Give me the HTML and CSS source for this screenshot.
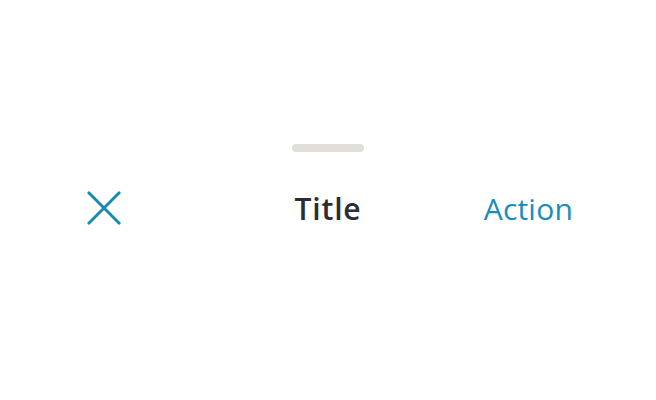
FILE: index.html
```html
<!DOCTYPE html>
<html lang="en">
<head>
    <meta charset="UTF-8">
    <meta name="viewport" content="width=device-width, initial-scale=1.0">
    <title>sheet</title>
    <link rel="stylesheet" href="styles.css">
</head>
<body>
    <div class="sheet">
        <div class="handle"></div>
        <div class="bar">
            <button class="close" aria-label="Close">
                <svg width="34" height="34" viewBox="0 0 34 34">
                    <path d="M1 1L33 33M33 1L1 33" stroke="#1a8ab6" stroke-width="3" fill="none"/>
                </svg>
            </button>
            <span class="title">Title</span>
            <span class="action">Action</span>
        </div>
    </div>
</body>
</html>
```
FILE: styles.css
```css
*{
    margin: 0;padding: 0;box-sizing: border-box;
}
body{
    width: 100%;
    height: 100vh;
    background-color: #fff;
    font-family: "Open Sans", "Noto Sans", sans-serif;
    display: flex;
    align-items: center;
    justify-content: center;
    padding-bottom: 28px;
}
.sheet{
    width: 100%;
    display: flex;
    flex-direction: column;
    align-items: center;
    gap: 36px;
}
.handle{
    width: 72px;
    height: 8px;
    border-radius: 4px;
    background-color: #e2dfd8;
}
.bar{
    width: 100%;
    display: grid;
    grid-template-columns: 1fr auto 1fr;
    align-items: center;
    padding: 0 83px;
}
.close{
    border: none;
    background: none;
    width: 42px;
    height: 34px;
    display: flex;
    justify-content: center;
    justify-self: start;
}
.title{
    font-size: 30px;
    font-weight: 600;
    letter-spacing: 0.8px;
    color: #2b2c34;
}
.action{
    font-size: 30px;
    letter-spacing: 0.2px;
    color: #1a8cba;
    justify-self: end;
}
```
